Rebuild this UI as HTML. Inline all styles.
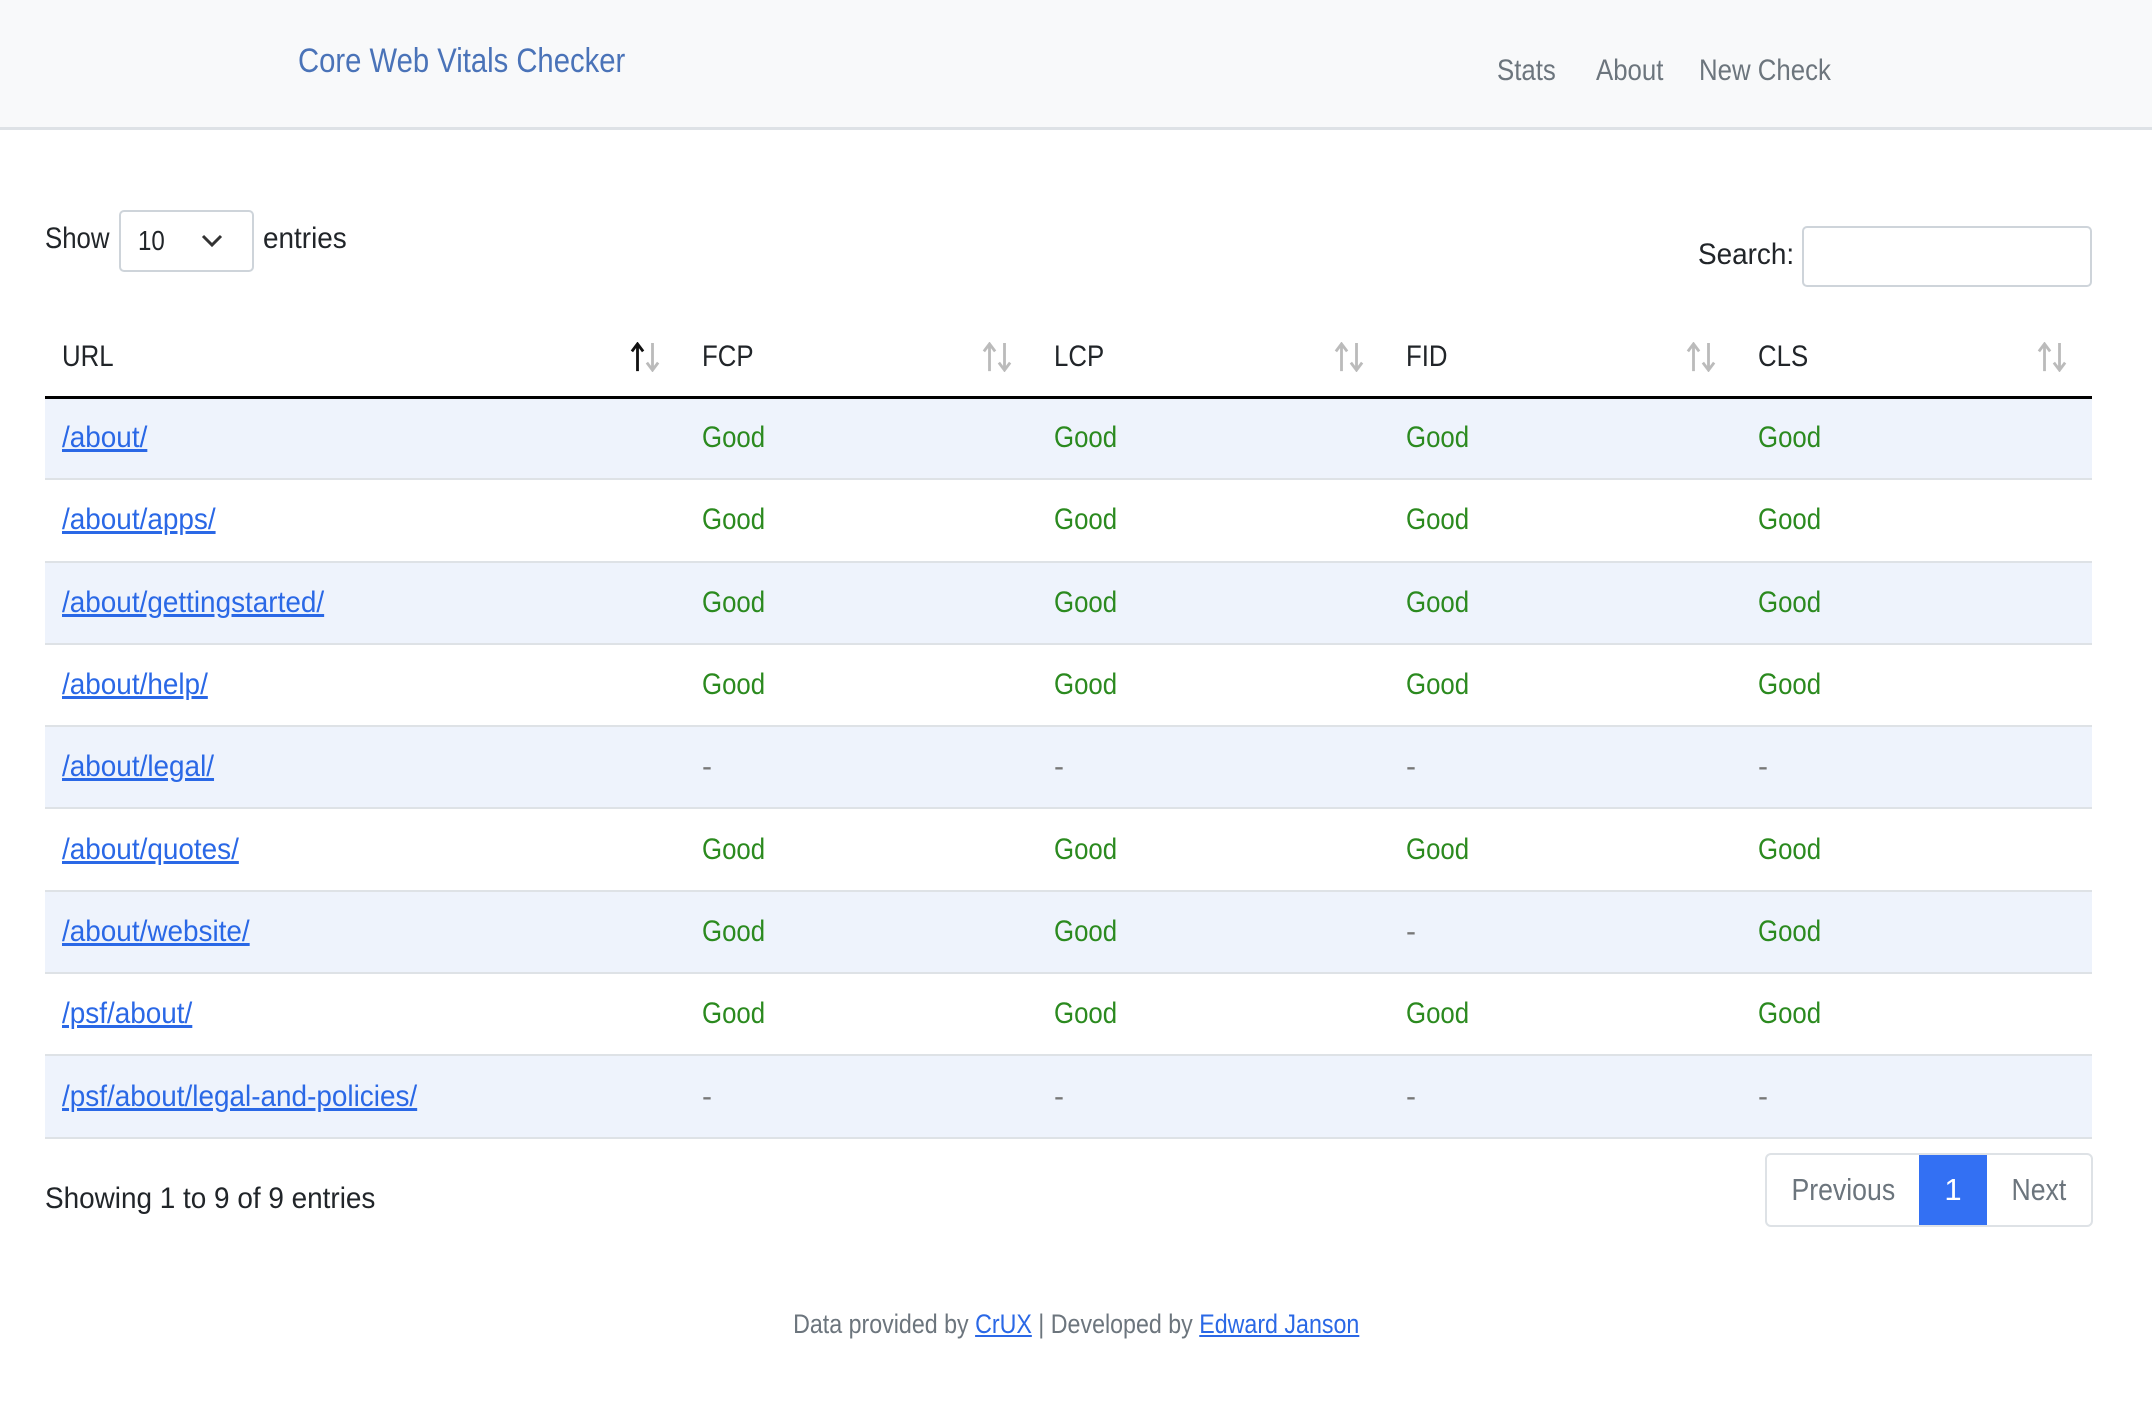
<!DOCTYPE html>
<html><head><meta charset="utf-8"><style>
*{box-sizing:border-box;margin:0;padding:0}
body{width:2152px;height:1416px;background:#fff;font-family:"Liberation Sans",sans-serif;color:#212529;font-size:30px;position:relative;overflow:hidden}
.n{display:inline-block;transform:scaleX(.86);transform-origin:0 50%;white-space:nowrap}
.w{display:inline-block;transform:scaleX(.93);transform-origin:0 50%;white-space:nowrap}
.nav{position:absolute;left:0;top:0;width:2152px;height:130px;background:#f8f9fa;border-bottom:3px solid #dee2e6}
.brand{position:absolute;left:298px;top:42px;font-size:34px;color:#4a73b8}
.links{position:absolute;top:54px;font-size:30px;color:#6c757d}
.abs{position:absolute}
.sel{position:absolute;left:119px;top:210px;width:135px;height:62px;border:2px solid #ced4da;border-radius:5px;padding:13px 0 0 17px;font-size:28px}
.inp{position:absolute;left:1802px;top:226px;width:290px;height:61px;border:2px solid #ced4da;border-radius:5px}
table{position:absolute;left:45px;top:318px;width:2047px;border-collapse:collapse}
th{height:79px;text-align:left;font-weight:normal;font-size:30px;padding-left:17px;border-bottom:3px solid #000;position:relative}
td{height:82.3px;padding-left:17px;border-bottom:2px solid #dee2e6;font-size:30px}
tr.s td{background:#eef3fc}
td a{color:#2a68e6;text-decoration:underline}
.g{color:#2b8a1f}
.d{color:#777}
.ar{position:absolute;right:24px;top:24px}
.pg{position:absolute;left:1765px;top:1153px;height:74px;border:2px solid #dee2e6;border-radius:6px;display:flex;font-size:31px;color:#6c757d;overflow:hidden}
.pg div{line-height:70px;text-align:center}
.pg .a{background:#3370f3;color:#fff}
.foot{position:absolute;top:1309px;left:0;width:2152px;text-align:center;font-size:27px;color:#6c757d}
.foot .n{transform-origin:50% 50%}
.foot a{color:#2a68e6;text-decoration:underline}
</style></head><body>
<div class="nav">
<div class="brand"><span class="n">Core Web Vitals Checker</span></div>
<div class="links" style="left:1497px"><span class="n">Stats</span></div>
<div class="links" style="left:1596px"><span class="n">About</span></div>
<div class="links" style="left:1699px"><span class="n">New Check</span></div>
</div>
<div class="abs" style="left:45px;top:222px"><span class="n">Show</span></div>
<div class="sel"><span class="n">10</span><svg style="position:absolute;left:80px;top:22px" width="22" height="14" viewBox="0 0 22 14"><path d="M2 2l9 9 9-9" fill="none" stroke="#333" stroke-width="3"/></svg></div>
<div class="abs" style="left:263px;top:222px"><span class="w">entries</span></div>
<div class="abs" style="left:1698px;top:238px"><span class="w">Search:</span></div>
<div class="inp"></div>
<table>
<tr><th style="width:640px"><span class="n">URL</span><svg class="ar" width="32" height="30" viewBox="0 0 34 32"><path d="M9 31V4M3 10l6-8 6 8" fill="none" stroke="#111" stroke-width="3"/><path d="M25 1v27M19 22l6 8 6-8" fill="none" stroke="#bbb" stroke-width="3"/></svg></th>
<th style="width:352px"><span class="n">FCP</span><svg class="ar" width="32" height="30" viewBox="0 0 34 32"><path d="M9 31V4M3 10l6-8 6 8" fill="none" stroke="#bbb" stroke-width="3"/><path d="M25 1v27M19 22l6 8 6-8" fill="none" stroke="#bbb" stroke-width="3"/></svg></th>
<th style="width:352px"><span class="n">LCP</span><svg class="ar" width="32" height="30" viewBox="0 0 34 32"><path d="M9 31V4M3 10l6-8 6 8" fill="none" stroke="#bbb" stroke-width="3"/><path d="M25 1v27M19 22l6 8 6-8" fill="none" stroke="#bbb" stroke-width="3"/></svg></th>
<th style="width:352px"><span class="n">FID</span><svg class="ar" width="32" height="30" viewBox="0 0 34 32"><path d="M9 31V4M3 10l6-8 6 8" fill="none" stroke="#bbb" stroke-width="3"/><path d="M25 1v27M19 22l6 8 6-8" fill="none" stroke="#bbb" stroke-width="3"/></svg></th>
<th><span class="n">CLS</span><svg class="ar" width="32" height="30" viewBox="0 0 34 32"><path d="M9 31V4M3 10l6-8 6 8" fill="none" stroke="#bbb" stroke-width="3"/><path d="M25 1v27M19 22l6 8 6-8" fill="none" stroke="#bbb" stroke-width="3"/></svg></th></tr>
<tr class="s"><td><a class="w">/about/</a></td><td class="g"><span class="n">Good</span></td><td class="g"><span class="n">Good</span></td><td class="g"><span class="n">Good</span></td><td class="g"><span class="n">Good</span></td></tr>
<tr><td><a class="w">/about/apps/</a></td><td class="g"><span class="n">Good</span></td><td class="g"><span class="n">Good</span></td><td class="g"><span class="n">Good</span></td><td class="g"><span class="n">Good</span></td></tr>
<tr class="s"><td><a class="w">/about/gettingstarted/</a></td><td class="g"><span class="n">Good</span></td><td class="g"><span class="n">Good</span></td><td class="g"><span class="n">Good</span></td><td class="g"><span class="n">Good</span></td></tr>
<tr><td><a class="w">/about/help/</a></td><td class="g"><span class="n">Good</span></td><td class="g"><span class="n">Good</span></td><td class="g"><span class="n">Good</span></td><td class="g"><span class="n">Good</span></td></tr>
<tr class="s"><td><a class="w">/about/legal/</a></td><td class="d">-</td><td class="d">-</td><td class="d">-</td><td class="d">-</td></tr>
<tr><td><a class="w">/about/quotes/</a></td><td class="g"><span class="n">Good</span></td><td class="g"><span class="n">Good</span></td><td class="g"><span class="n">Good</span></td><td class="g"><span class="n">Good</span></td></tr>
<tr class="s"><td><a class="w">/about/website/</a></td><td class="g"><span class="n">Good</span></td><td class="g"><span class="n">Good</span></td><td class="d">-</td><td class="g"><span class="n">Good</span></td></tr>
<tr><td><a class="w">/psf/about/</a></td><td class="g"><span class="n">Good</span></td><td class="g"><span class="n">Good</span></td><td class="g"><span class="n">Good</span></td><td class="g"><span class="n">Good</span></td></tr>
<tr class="s"><td><a class="w">/psf/about/legal-and-policies/</a></td><td class="d">-</td><td class="d">-</td><td class="d">-</td><td class="d">-</td></tr>
</table>
<div class="abs" style="left:45px;top:1182px"><span class="w">Showing 1 to 9 of 9 entries</span></div>
<div class="pg"><div style="width:152px"><span class="n" style="transform-origin:50% 50%">Previous</span></div><div class="a" style="width:68px">1</div><div style="width:104px"><span class="n" style="transform-origin:50% 50%">Next</span></div></div>
<div class="foot"><span class="n">Data provided by <a>CrUX</a> | Developed by <a>Edward Janson</a></span></div>
</body></html>
